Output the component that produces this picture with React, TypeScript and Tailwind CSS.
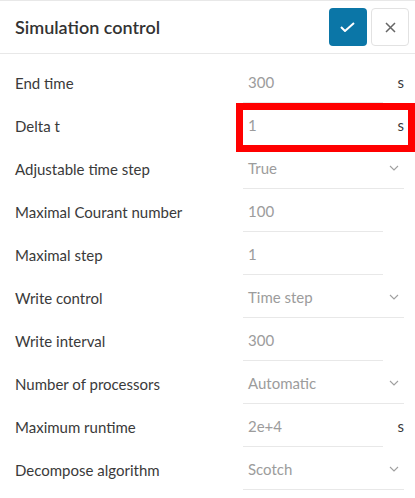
const rows = [
    { label: "End time", value: "300", unit: "s" },
    { label: "Delta t", value: "1", unit: "s", marked: true },
    { label: "Adjustable time step", value: "True", select: true },
    { label: "Maximal Courant number", value: "100" },
    { label: "Maximal step", value: "1" },
    { label: "Write control", value: "Time step", select: true },
    { label: "Write interval", value: "300" },
    { label: "Number of processors", value: "Automatic", select: true },
    { label: "Maximum runtime", value: "2e+4", unit: "s" },
    { label: "Decompose algorithm", value: "Scotch", select: true },
];

type Row = { label: string; value: string; unit?: string; select?: boolean; marked?: boolean };

const Chevron = () => (
    <svg width="10" height="6" viewBox="0 0 10 6" fill="none" className="mr-[5px]">
        <path d="M1 1l4 4 4-4" stroke="#a0a0a0" strokeWidth="1.1" />
    </svg>
);

const FieldRow = ({ row }: { row: Row }) => {
    return (
        <div className="flex h-[43px]">
            <div className="w-[243px] pl-[15px] pt-[12px] text-[15px] text-[#3a3a3a]">{row.label}</div>
            <div className="relative flex w-[161px]">
                {row.select ? (
                    <div className="flex w-full items-center justify-between border-b border-[#e8e8e8] pl-[5px] pt-[2px] text-[15px] text-[#9c9c9c]">
                        <span>{row.value}</span>
                        <Chevron />
                    </div>
                ) : (
                    <div className="flex w-[140px] items-center border-b border-[#e8e8e8] pl-[5px] pt-[2px] text-[15px] text-[#9c9c9c]">
                        {row.value}
                    </div>
                )}
                {row.unit && (
                    <div className="flex flex-1 items-center justify-end pt-[2px] text-[15px] text-[#3a3a3a]">{row.unit}</div>
                )}
                {row.marked && (
                    <div className="absolute left-[-7px] right-[-11px] top-0 bottom-[-6px] border-[7px] border-[#ff0000]" />
                )}
            </div>
        </div>
    );
};

const App = () => {
    return (
        <div className="h-[498px] w-[415px] bg-white" style={{ fontFamily: "Lato, 'Open Sans', sans-serif" }}>
            <div className="flex h-[54px] items-center justify-between border-y border-[#e8e8e8] pl-[15px] pr-[6px]">
                <h1 className="text-[18px] font-semibold text-[#333]">Simulation control</h1>
                <div className="flex gap-[4px]">
                    <button className="flex h-[38px] w-[38px] items-center justify-center rounded-[4px] bg-[#0b76a7]">
                        <svg width="16" height="10" viewBox="0 0 16 10" fill="none">
                            <path d="M1 5l4 4 9-8" stroke="white" strokeWidth="2" />
                        </svg>
                    </button>
                    <button className="flex h-[38px] w-[38px] items-center justify-center rounded-[4px] border border-[#e2e2e2] bg-white">
                        <svg width="11" height="11" viewBox="0 0 11 11" fill="none">
                            <path d="M1 1l9 9M10 1l-9 9" stroke="#666" strokeWidth="1.5" />
                        </svg>
                    </button>
                </div>
            </div>
            <div className="pt-[6px]">
                {rows.map((r) => (
                    <FieldRow key={r.label} row={r} />
                ))}
            </div>
        </div>
    );
};

export default App;
